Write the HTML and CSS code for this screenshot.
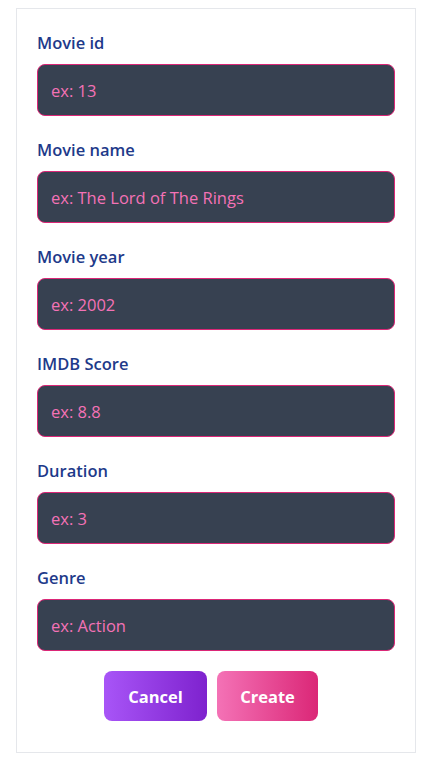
FILE: index.html
```html
<!DOCTYPE html>
<html>
<head>
<meta charset="utf-8">
<link rel="stylesheet" href="styles.css">
</head>
<body>
<div class="page">
  <form class="card">
    <div class="field">
      <label class="label">Movie id</label>
      <input class="input" placeholder="ex: 13">
    </div>
    <div class="field">
      <label class="label">Movie name</label>
      <input class="input" placeholder="ex: The Lord of The Rings">
    </div>
    <div class="field">
      <label class="label">Movie year</label>
      <input class="input" placeholder="ex: 2002">
    </div>
    <div class="field">
      <label class="label">IMDB Score</label>
      <input class="input" placeholder="ex: 8.8">
    </div>
    <div class="field">
      <label class="label">Duration</label>
      <input class="input" placeholder="ex: 3">
    </div>
    <div class="field">
      <label class="label">Genre</label>
      <input class="input" placeholder="ex: Action">
    </div>
    <div class="actions">
      <button type="button" class="btn btn-cancel">Cancel</button>
      <button type="button" class="btn btn-create">Create</button>
    </div>
  </form>
</div>
</body>
</html>
```

FILE: styles.css
```css
* { box-sizing: border-box; }
html, body { margin: 0; padding: 0; background: #fff; }
body { font-family: "Open Sans", "Noto Sans", sans-serif; }
.page { padding: 8px 11px 0 16px; }
.card {
  width: 400px;
  border: 1px solid #e5e7eb;
  padding: 22px 20px 31px 20px;
  display: flex;
  flex-direction: column;
}
.field { display: flex; flex-direction: column; margin-bottom: 22px; }
.field:nth-last-child(2) { margin-bottom: 20px; }
.label {
  font-size: 16.5px;
  font-weight: 600;
  color: #1e3a8a;
  line-height: 24px;
  margin-bottom: 9px;
}
.input {
  width: 358px;
  height: 52px;
  border: 1px solid #db2777;
  border-radius: 8px;
  background: #374151;
  padding: 0 13px;
  font-family: inherit;
  font-size: 16.5px;
  color: #f472b6;
  outline: none;
}
.input::placeholder { color: #f472b6; opacity: 1; }
.actions { display: flex; justify-content: center; }
.btn {
  height: 50px;
  border: none;
  border-radius: 8px;
  color: #fff;
  font-family: inherit;
  font-size: 16.5px;
  font-weight: 700;
  margin-right: 10px;
  padding: 0;
}
.btn-cancel { width: 103px; background: linear-gradient(to right, #a855f7, #7e22ce); }
.btn-create { width: 101px; background: linear-gradient(to right, #f472b6, #db2777); }
```
